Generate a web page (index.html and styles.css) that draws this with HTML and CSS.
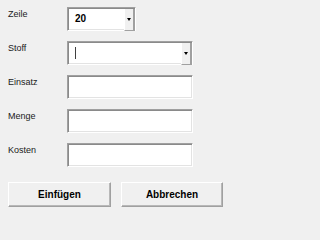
FILE: index.html
```html
<!DOCTYPE html>
<html>
<head>
<meta charset="utf-8">
<link rel="stylesheet" href="styles.css">
</head>
<body>
<div class="form">
  <div class="row">
    <span class="label">Zeile</span>
    <div class="combo short">
      <span class="value">20</span>
      <span class="drop"><span class="arrow"></span></span>
    </div>
  </div>
  <div class="row">
    <span class="label">Stoff</span>
    <div class="combo long">
      <span class="value"><span class="caret"></span></span>
      <span class="drop"><span class="arrow"></span></span>
    </div>
  </div>
  <div class="row">
    <span class="label">Einsatz</span>
    <div class="field"></div>
  </div>
  <div class="row">
    <span class="label">Menge</span>
    <div class="field"></div>
  </div>
  <div class="row">
    <span class="label">Kosten</span>
    <div class="field"></div>
  </div>
  <div class="buttons">
    <div class="btn first">Einfügen</div>
    <div class="btn second">Abbrechen</div>
  </div>
</div>
</body>
</html>
```

FILE: styles.css
```css
html, body {
  margin: 0;
  padding: 0;
  background: #f0f0f0;
}
.form {
  padding: 7px 0 0 8px;
  font-family: "Liberation Sans", Arial, sans-serif;
  font-size: 9px;
  color: #000;
  display: flex;
  flex-direction: column;
  gap: 10px;
}
.row {
  display: flex;
  align-items: flex-start;
  height: 24px;
}
.label {
  width: 59px;
  padding-top: 2px;
  line-height: 11px;
  color: #1a1a1a;
}
.combo, .field {
  box-sizing: border-box;
  height: 24px;
  background: #fff;
  border: 1px solid;
  border-color: #a0a0a0 #ffffff #ffffff #a0a0a0;
  box-shadow: inset 1px 1px 0 #8a8a8a, inset -1px -1px 0 #e3e3e3;
  display: flex;
}
.field { width: 126px; }
.short { width: 69px; }
.long { width: 126px; }
.value {
  flex: 1;
  display: flex;
  align-items: center;
  padding-left: 7px;
  font-weight: bold;
  font-size: 10px;
  padding-bottom: 1px;
}
.caret {
  display: block;
  width: 1px;
  height: 12px;
  background: #404040;
  margin-top: 1px;
}
.drop {
  box-sizing: border-box;
  width: 11px;
  height: 100%;
  margin-top: 1px;
  background: #f0f0f0;
  border-left: 1px solid #ffffff;
  border-right: 2px solid #a0a0a0;
  border-bottom: 1px solid #a0a0a0;
  display: flex;
  align-items: center;
  justify-content: center;
}
.arrow {
  width: 0;
  height: 0;
  border-left: 2.5px solid transparent;
  border-right: 2.5px solid transparent;
  border-top: 3px solid #000;
  margin-left: -1px;
}
.buttons {
  display: flex;
  gap: 10px;
  margin-top: 5px;
}
.btn {
  box-sizing: border-box;
  height: 25px;
  background: #f0f0f0;
  border: 1px solid;
  border-color: #ffffff #a0a0a0 #a0a0a0 #ffffff;
  box-shadow: inset -1px -1px 0 #b8b8b8;
  display: flex;
  align-items: center;
  justify-content: center;
  font-weight: bold;
  font-size: 10px;
  padding-bottom: 1px;
}
.first { width: 103px; }
.second { width: 102px; }
```
